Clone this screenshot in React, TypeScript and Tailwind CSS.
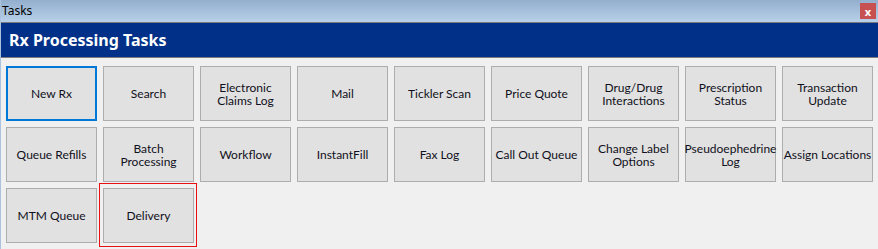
import React from "react";

const rows: string[][] = [
  ["New Rx", "Search", "Electronic\nClaims Log", "Mail", "Tickler Scan", "Price Quote", "Drug/Drug\nInteractions", "Prescription\nStatus", "Transaction\nUpdate"],
  ["Queue Refills", "Batch\nProcessing", "Workflow", "InstantFill", "Fax Log", "Call Out Queue", "Change Label\nOptions", "Pseudoephedrine\nLog", "Assign Locations"],
  ["MTM Queue", "Delivery"],
];

const btnFont = { fontFamily: 'Lato, "Noto Sans", sans-serif' };

function TaskButton({ label, focused, selected }: { label: string; focused?: boolean; selected?: boolean }) {
  return (
    <div className="relative">
      <button
        className={
          "w-[91px] h-[55px] flex items-center justify-center text-center bg-[#e1e1e1] text-[12px] leading-[13px] text-[#101020] whitespace-pre overflow-visible " +
          (focused ? "border-2 border-[#0078d7]" : "border border-[#adadad]")
        }
        style={btnFont}
      >
        {label}
      </button>
      {selected && (
        <div className="absolute -left-[4px] -right-[3px] -top-[5px] -bottom-[4px] border border-[#e81010] pointer-events-none" />
      )}
    </div>
  );
}

export default function App() {
  return (
    <div
      className="w-[878px] h-[249px] bg-[#f0f0f0] flex flex-col overflow-hidden border-l border-[#a9c3de]"
      style={{ fontFamily: '"Noto Sans", "Open Sans", sans-serif' }}
    >
      <div className="h-[22px] flex items-center justify-between bg-gradient-to-b from-[#93afcd] to-[#b9d1ea] pl-[1px] pr-[2px]">
        <span className="text-[12px] text-black leading-none">Tasks</span>
        <div className="w-[16px] h-[16px] bg-[#c75050] flex items-center justify-center text-white text-[11px] font-bold leading-none">
          x
        </div>
      </div>
      <div className="h-[36px] bg-[#003087] border-y border-[#7b7b7b] flex items-center pl-[8px]">
        <span className="text-white font-bold text-[16px] leading-none">Rx Processing Tasks</span>
      </div>
      <div className="pt-[8px] pl-[5px] flex flex-col gap-[6px]">
        {rows.map((row, ri) => (
          <div key={ri} className="flex gap-[6px]">
            {row.map((label, ci) => (
              <TaskButton
                key={ci}
                label={label}
                focused={ri === 0 && ci === 0}
                selected={ri === 2 && ci === 1}
              />
            ))}
          </div>
        ))}
      </div>
    </div>
  );
}
